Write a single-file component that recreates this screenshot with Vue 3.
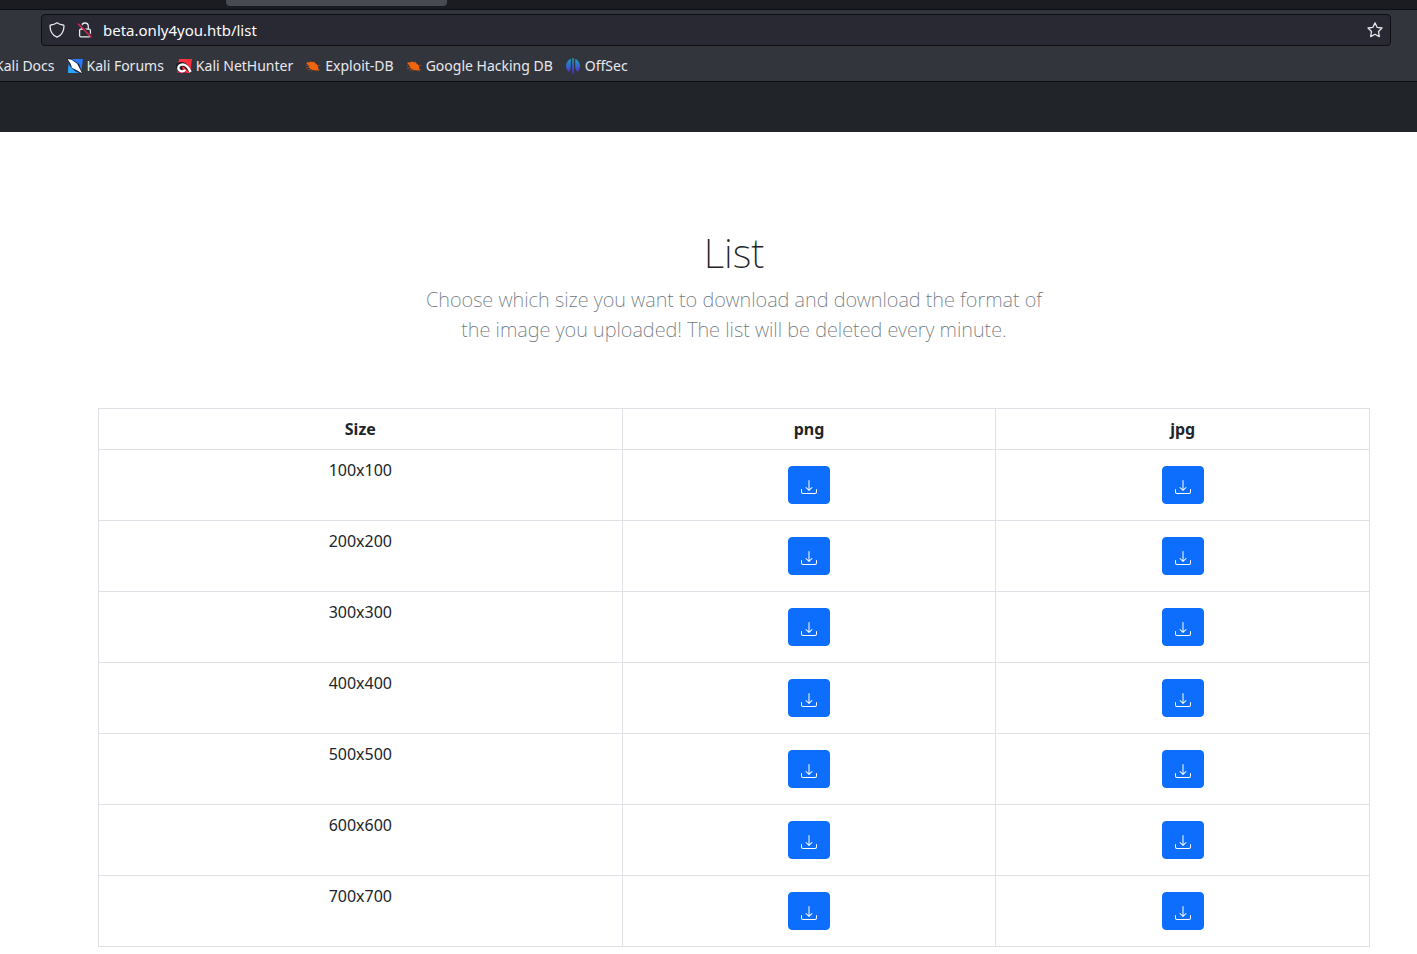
<script setup>
const bookmarks = [
  { label: 'Kali Docs', icon: '' },
  { label: 'Kali Forums', icon: 'forums' },
  { label: 'Kali NetHunter', icon: 'nethunter' },
  { label: 'Exploit-DB', icon: 'bug' },
  { label: 'Google Hacking DB', icon: 'bug' },
  { label: 'OffSec', icon: 'offsec' },
]
const sizes = [100, 200, 300, 400, 500, 600, 700].map((n) => `${n}x${n}`)
const formats = ['png', 'jpg']
</script>

<template>
  <div class="window">
    <header class="chrome">
      <div class="tabstrip"><div class="tab"></div></div>
      <div class="toolbar">
        <div class="urlbar">
          <button class="tool" aria-label="Tracking protection">
            <svg viewBox="0 0 16 16" width="16" height="16" fill="none" stroke="#e8e8ec" stroke-width="1.3" stroke-linejoin="round">
              <path d="M8 .8c1.700 1.300 3.900 2 6.200 2.200.5 0 .8.400.8.900-.1 5.200-2.300 9.200-7 11.300C3.300 13.100 1.100 9.100 1 3.900c0-.5.3-.9.8-.9C4.100 2.800 6.300 2.100 8 .8z" />
            </svg>
          </button>
          <button class="tool" aria-label="Connection is not secure">
            <svg viewBox="0 0 16 16" width="16" height="16" fill="none">
              <path d="M4.700 7V4.300a3.300 3.300 0 0 1 6.600 0V7M4 7.200h8c.8 0 1.400.6 1.400 1.400v5c0 .8-.6 1.200-1.400 1.200H4c-.8 0-1.400-.4-1.400-1.200v-5c0-.8.6-1.400 1.400-1.400z" stroke="#e8e8ec" stroke-width="1.300" />
              <path d="M2.500 1.400 15 14.400" stroke="#2a2a37" stroke-width="1.500" />
              <path d="M1.300 1.900 14 15.100" stroke="#e22850" stroke-width="1.400" stroke-linecap="round" />
            </svg>
          </button>
          <input class="address" type="text" value="beta.only4you.htb/list" aria-label="Address" />
          <button class="tool" aria-label="Bookmark this page">
            <svg viewBox="0 0 16 16" width="16" height="16" fill="none" stroke="#e8e8ec" stroke-width="1.300" stroke-linejoin="round">
              <path d="M8 .9l2.100 4.400 4.900.7-3.500 3.500.8 5.100L8 12.300l-4.300 2.300.8-5.100L1 6l4.900-.7z" />
            </svg>
          </button>
        </div>
      </div>
      <nav class="bookmarks" aria-label="Bookmarks">
        <a v-for="b in bookmarks" :key="b.label" class="bookmark" href="#">
          <svg v-if="b.icon === 'forums'" viewBox="0 0 16 16" width="16" height="16">
            <path d="M2 1h14l-2 14H1z" fill="#2777ff" />
            <path d="M1 15 1.600 7 10 15z" fill="#2aa4f4" />
            <path d="M0 0l3.500.4L12 6l2 5.500L15.500 16 8 13 3 8z" fill="#1c1d22" />
            <path d="M.6 1 4.500 1.800l5.700 4 2 3.700L15 15.300l-5.700-3.400L5 9.800 3.700 6z" fill="#fff" />
          </svg>
          <svg v-else-if="b.icon === 'nethunter'" viewBox="0 0 16 16" width="16" height="16">
            <path d="M3 1h13l-2 14H1z" fill="#ff2f3c" />
            <path d="M1 9h4l6 6H1z" fill="#c3164e" />
            <path d="M0 7C1 4.500 3.500 3.800 6 4c4 .4 7 3.500 9.300 9.500L13 14 8.500 9.500 6 8.300 6.500 12 3 14 0 10z" fill="#1c1d22" />
            <path d="M14.500 14C12.800 9.200 9 5.800 5.500 6.600 2.400 7.300 1.300 10.200 3.300 12.200c1.700 1.700 4.800 1.600 5.800-.4" fill="none" stroke="#fff" stroke-width="2.400" />
          </svg>
          <svg v-else-if="b.icon === 'bug'" viewBox="0 0 16 16" width="16" height="16">
            <path d="M.8 7.500 4 6.800M1 10.200l4-1M3 12.200l3-1.500M6 13.400l2-2M5.300 2.800l1.200 2M9 3.200 10 6M11.500 8l3.800-.6M12 10l2.500 1.500M10 11.500l2 2" stroke="#a8501e" stroke-width=".8" />
            <path d="M1.800 4.200 4 4.600c2.200-.9 4.800-.5 6.600.8 1.500 1 2.500 2.300 2.800 3.800l-.6.9 1.500 2.900-2.600-1.100c-2.300.7-4.700.2-6.300-1.200-1.200-1-1.900-2.300-1.900-3.700L1.500 5.800z" fill="#f2640f" />
          </svg>
          <svg v-else-if="b.icon === 'offsec'" viewBox="0 0 16 16" width="16" height="16">
            <defs>
              <linearGradient id="offsec-fill" x1="0" y1="0" x2="0" y2="16" gradientUnits="userSpaceOnUse">
                <stop offset="0" stop-color="#12a9c0" />
                <stop offset="1" stop-color="#5a22d8" />
              </linearGradient>
            </defs>
            <path d="M5.800.8v8c0 2-.8 3.700-2.200 5A7.800 7.800 0 0 1 5.800.8zM10.200.8v8c0 2 .8 3.700 2.200 5A7.800 7.800 0 0 0 10.200.8zM7.200.2h1.600v15.600H7.200z" fill="url(#offsec-fill)" />
          </svg>
          <span>{{ b.label }}</span>
        </a>
      </nav>
    </header>

    <div class="site-nav"></div>

    <main class="content">
      <section class="intro">
        <h1>List</h1>
        <p>Choose which size you want to download and download the format of the image you uploaded! The list will be deleted every minute.</p>
      </section>
      <table class="sizes">
        <thead>
          <tr>
            <th class="size-col" scope="col">Size</th>
            <th v-for="f in formats" :key="f" scope="col">{{ f }}</th>
          </tr>
        </thead>
        <tbody>
          <tr v-for="s in sizes" :key="s">
            <td>{{ s }}</td>
            <td v-for="f in formats" :key="f">
              <button class="download" :aria-label="`Download ${s} ${f}`">
                <svg viewBox="0 0 16 16" width="16" height="16" fill="currentColor">
                  <path d="M.5 9.900a.5.5 0 0 1 .5.5v2.500a1 1 0 0 0 1 1h12a1 1 0 0 0 1-1v-2.500a.5.5 0 0 1 1 0v2.500a2 2 0 0 1-2 2H2a2 2 0 0 1-2-2v-2.500a.5.5 0 0 1 .5-.5z" />
                  <path d="M7.646 11.854a.5.5 0 0 0 .708 0l3-3a.5.5 0 0 0-.708-.708L8.500 10.293V1.500a.5.5 0 0 0-1 0v8.793L5.354 8.146a.5.5 0 1 0-.708.708l3 3z" />
                </svg>
              </button>
            </td>
          </tr>
        </tbody>
      </table>
    </main>
  </div>
</template>

<style>
body {
  margin: 0;
  background: #fff;
}
</style>

<style scoped>
.window {
  font-family: "Noto Sans", "Open Sans", sans-serif;
  font-size: 16px;
  line-height: 24px;
  color: #212529;
  overflow: hidden;
}
.chrome {
  background: #33353d;
  border-bottom: 1px solid #0e0f13;
  color: #e8e8ec;
}
.tabstrip {
  height: 9px;
  background: #1b1c21;
  border-bottom: 1px solid #0e0f13;
}
.tab {
  width: 221px;
  height: 6px;
  margin-left: 226px;
  background: #484a52;
  border-radius: 0 0 4px 4px;
}
.toolbar {
  padding: 4px 26px 4px 41px;
}
.urlbar {
  box-sizing: border-box;
  height: 32px;
  display: flex;
  align-items: center;
  gap: 12px;
  padding: 0 7px;
  background: #282933;
  border: 1px solid #0e0f13;
  border-radius: 4px;
}
.tool {
  display: flex;
  padding: 0;
  border: 0;
  background: none;
}
.address {
  flex: 1;
  min-width: 0;
  margin-left: -2px;
  padding: 0;
  border: 0;
  outline: 0;
  background: none;
  color: #fbfbfe;
  font: 15px/24px "Noto Sans", "Open Sans", sans-serif;
}
.bookmarks {
  display: flex;
  gap: 12px;
  height: 31px;
  margin-left: -5px;
}
.bookmark {
  display: flex;
  align-items: center;
  gap: 4px;
  height: 24px;
  margin-top: 4px;
  font-size: 14px;
  white-space: nowrap;
  color: inherit;
  text-decoration: none;
}
.site-nav {
  height: 50px;
  background: #212529;
}
.content {
  padding: 97px 47px 7px 98px;
}
.intro {
  max-width: 640px;
  margin: 0 auto;
  text-align: center;
}
h1 {
  margin: 0 0 8px;
  font-size: 40px;
  line-height: 48px;
  font-weight: 200;
}
.intro p {
  margin: 0;
  font-size: 20px;
  line-height: 30px;
  font-weight: 200;
  color: #6c757d;
}
.sizes {
  width: 100%;
  margin-top: 63px;
  border-collapse: collapse;
  table-layout: fixed;
  text-align: center;
}
.size-col {
  box-sizing: border-box;
  width: 41.2%;
}
th,
td {
  padding: 8px;
  border: 1px solid #dee2e6;
  vertical-align: top;
}
th {
  font-weight: 700;
}
.download {
  display: block;
  margin: 8px auto;
  padding: 6px 12px;
  border: 1px solid #0d6efd;
  border-radius: 4px;
  background: #0d6efd;
  color: #fff;
  line-height: 24px;
}
.download svg {
  display: block;
  margin: 6px 0 2px;
}
</style>
